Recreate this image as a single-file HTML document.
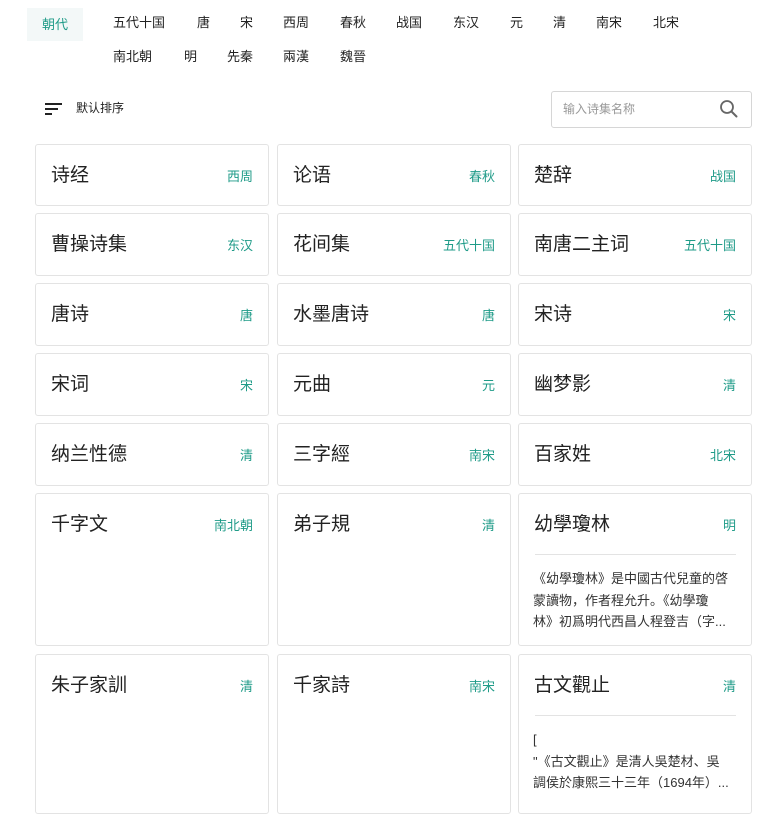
<!DOCTYPE html>
<html><head><meta charset="utf-8"><style>
*{margin:0;padding:0;box-sizing:border-box}
body{width:757px;height:800px;overflow:hidden;background:#fff;font-family:"Liberation Sans","Noto Sans CJK SC",sans-serif;color:#222;position:relative}
.t{position:absolute;font-size:13px;line-height:16px;color:#222;white-space:nowrap}
.sel{position:absolute;left:27px;top:8px;width:56px;height:33px;background:#f3f8f8;color:#1f9b88;font-size:13px;line-height:33px;text-align:center}
.card{position:absolute;border:1px solid #e3e3e3;border-radius:3px;background:#fff;width:234px}
.card .n{position:absolute;left:15px;top:19px;font-size:19px;line-height:24px;color:#222;white-space:nowrap}
.card .d{position:absolute;right:15px;top:24px;font-size:13px;line-height:16px;color:#1f9b88}
.card .hr{position:absolute;left:16px;right:15px;top:60px;border-top:1px solid #e3e3e3}
.card .desc{position:absolute;left:14px;right:10px;top:74px;font-size:13px;line-height:21.5px;color:#333;white-space:nowrap;font-feature-settings:normal}
</style></head><body>
<div class="sel">朝代</div>
<div class="t" style="left:113px;top:15px">五代十国</div>
<div class="t" style="left:197px;top:15px">唐</div>
<div class="t" style="left:240px;top:15px">宋</div>
<div class="t" style="left:283px;top:15px">西周</div>
<div class="t" style="left:340px;top:15px">春秋</div>
<div class="t" style="left:396px;top:15px">战国</div>
<div class="t" style="left:453px;top:15px">东汉</div>
<div class="t" style="left:510px;top:15px">元</div>
<div class="t" style="left:553px;top:15px">清</div>
<div class="t" style="left:596px;top:15px">南宋</div>
<div class="t" style="left:653px;top:15px">北宋</div>
<div class="t" style="left:113px;top:49px">南北朝</div>
<div class="t" style="left:184px;top:49px">明</div>
<div class="t" style="left:227px;top:49px">先秦</div>
<div class="t" style="left:283px;top:49px">兩漢</div>
<div class="t" style="left:340px;top:49px">魏晉</div>

<div style="position:absolute;left:45px;top:103px;width:17px;height:2px;background:#222"></div>
<div style="position:absolute;left:45px;top:108px;width:13px;height:2px;background:#222"></div>
<div style="position:absolute;left:45px;top:113px;width:7px;height:2px;background:#222"></div>
<div class="t" style="left:76px;top:100px;font-size:12px">默认排序</div>

<div style="position:absolute;left:551px;top:91px;width:201px;height:37px;border:1px solid #d6d6d6;border-radius:3px"></div>
<div class="t" style="left:563px;top:101px;color:#999;font-size:12px">输入诗集名称</div>
<svg style="position:absolute;left:719px;top:99px" width="20" height="20" viewBox="0 0 20 20"><circle cx="8" cy="8" r="6" fill="none" stroke="#666" stroke-width="1.8"/><path d="M12.5 12.5L17.5 17.5" stroke="#666" stroke-width="2" stroke-linecap="round"/></svg>

<div class="card" style="left:35px;top:144px;height:62px"><div class="n">诗经</div><div class="d">西周</div></div>
<div class="card" style="left:277px;top:144px;height:62px"><div class="n">论语</div><div class="d">春秋</div></div>
<div class="card" style="left:518px;top:144px;height:62px"><div class="n">楚辞</div><div class="d">战国</div></div>

<div class="card" style="left:35px;top:213px;height:63px"><div class="n">曹操诗集</div><div class="d">东汉</div></div>
<div class="card" style="left:277px;top:213px;height:63px"><div class="n">花间集</div><div class="d">五代十国</div></div>
<div class="card" style="left:518px;top:213px;height:63px"><div class="n">南唐二主词</div><div class="d">五代十国</div></div>

<div class="card" style="left:35px;top:283px;height:63px"><div class="n">唐诗</div><div class="d">唐</div></div>
<div class="card" style="left:277px;top:283px;height:63px"><div class="n">水墨唐诗</div><div class="d">唐</div></div>
<div class="card" style="left:518px;top:283px;height:63px"><div class="n">宋诗</div><div class="d">宋</div></div>

<div class="card" style="left:35px;top:353px;height:63px"><div class="n">宋词</div><div class="d">宋</div></div>
<div class="card" style="left:277px;top:353px;height:63px"><div class="n">元曲</div><div class="d">元</div></div>
<div class="card" style="left:518px;top:353px;height:63px"><div class="n">幽梦影</div><div class="d">清</div></div>

<div class="card" style="left:35px;top:423px;height:63px"><div class="n">纳兰性德</div><div class="d">清</div></div>
<div class="card" style="left:277px;top:423px;height:63px"><div class="n">三字經</div><div class="d">南宋</div></div>
<div class="card" style="left:518px;top:423px;height:63px"><div class="n">百家姓</div><div class="d">北宋</div></div>

<div class="card" style="left:35px;top:493px;height:153px"><div class="n">千字文</div><div class="d">南北朝</div></div>
<div class="card" style="left:277px;top:493px;height:153px"><div class="n">弟子規</div><div class="d">清</div></div>
<div class="card" style="left:518px;top:493px;height:153px"><div class="n">幼學瓊林</div><div class="d">明</div><div class="hr"></div><div class="desc">《幼學瓊林》是中國古代兒童的啓<br>蒙讀物，作者程允升。《幼學瓊<br>林》初爲明代西昌人程登吉（字...</div></div>

<div class="card" style="left:35px;top:654px;height:160px"><div class="n">朱子家訓</div><div class="d">清</div></div>
<div class="card" style="left:277px;top:654px;height:160px"><div class="n">千家詩</div><div class="d">南宋</div></div>
<div class="card" style="left:518px;top:654px;height:160px"><div class="n">古文觀止</div><div class="d">清</div><div class="hr"></div><div class="desc">[<br>"《古文觀止》是清人吳楚材、吳<br>調侯於康熙三十三年（1694年）...</div></div>
</body></html>
